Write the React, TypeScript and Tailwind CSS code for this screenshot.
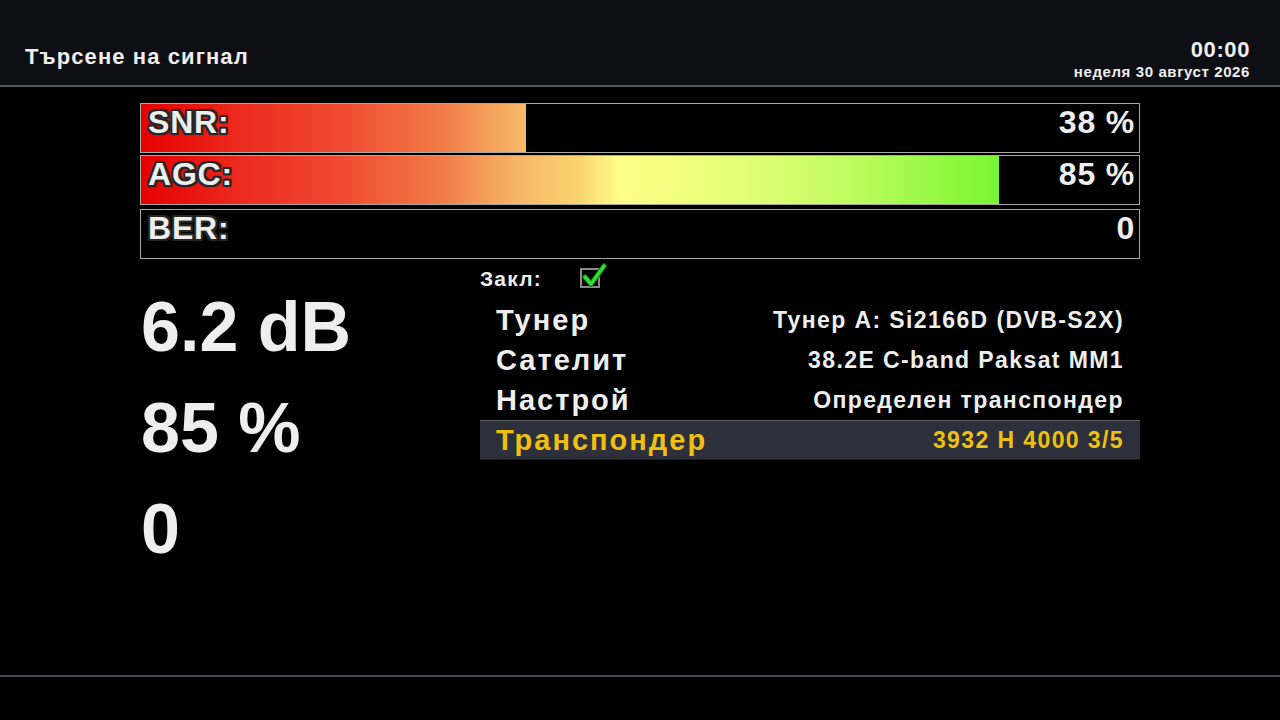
import React from "react";

const GRAD =
  "linear-gradient(to right, #e60000 0%, #ec2a1e 10%, #f04a30 20%, #f27a48 30%, #f6b868 38%, #fad470 44%, #ffff88 48%, #e4ff76 60%, #c4fc62 70%, #78f531 86%, #5af020 100%)";

function Bar({ label, value, pct, mt }: { label: string; value: string; pct: number; mt: string }) {
  return (
    <div className={`relative h-[50px] w-[1000px] border border-[#a8a8a8] bg-black ${mt}`}>
      <div className="absolute left-0 top-0 h-full overflow-hidden" style={{ width: `${pct}%` }}>
        <div className="h-full w-[998px]" style={{ backgroundImage: GRAD }} />
      </div>
      <div className="relative flex h-full items-start justify-between pl-[7px] pr-[4px] pt-[2px]">
        <span className="text-[32px] font-bold leading-[32px] tracking-[0.8px] text-[#eeeeee] [text-shadow:-2px_-2px_0_#262626,2px_-2px_0_#262626,-2px_2px_0_#262626,2px_2px_0_#262626,0_2px_0_#262626,0_-2px_0_#262626,2px_0_0_#262626,-2px_0_0_#262626,0_0_3px_#000]">
          {label}
        </span>
        <span className="text-[32px] font-bold leading-[32px] tracking-[0.8px] text-[#eeeeee]">{value}</span>
      </div>
    </div>
  );
}

function Row({ k, v, active }: { k: string; v: string; active?: boolean }) {
  return (
    <div
      className={`flex h-[40px] items-center justify-between px-[16px] ${
        active ? "border-t border-t-[#5a5c66] border-b border-b-[#1a1b22] bg-[#2d2f3b] text-[#f0c010]" : "text-[#eeeeee]"
      }`}
    >
      <span className="text-[29px] font-bold leading-[29px] tracking-[2px]">{k}</span>
      <span className="text-[23px] font-bold leading-[23px] tracking-[1.4px]">{v}</span>
    </div>
  );
}

export default function App() {
  return (
    <div className="flex h-[720px] w-[1280px] flex-col overflow-hidden bg-black font-['Liberation_Sans',Arial,sans-serif] text-[#eeeeee]">
      <header className="flex h-[85px] items-start justify-between bg-[#0e0f14] pl-[25px] pr-[30px]">
        <div className="mt-[46px] text-[22px] font-bold leading-[22px] tracking-[1.1px]">Търсене на сигнал</div>
        <div className="mt-[39px] flex flex-col items-end">
          <div className="text-[22px] font-bold leading-[22px] tracking-[0.6px]">00:00</div>
          <div className="mt-[3px] text-[15px] font-bold leading-[15px] tracking-[0.6px]">неделя 30 август 2026</div>
        </div>
      </header>
      <div className="h-[2px] bg-[#56575e]" />

      <div className="ml-[140px] flex w-[1000px] flex-col">
        <Bar label="SNR:" value="38 %" pct={38.6} mt="mt-[16px]" />
        <Bar label="AGC:" value="85 %" pct={86} mt="mt-[2px]" />
        <Bar label="BER:" value="0" pct={0} mt="mt-[4px]" />

        <div className="flex">
          <div className="mt-[18px] w-[340px] pl-[1px] text-[70px] font-bold leading-[101px] text-[#eeeeee]">
            <div>6.2 dB</div>
            <div>85 %</div>
            <div>0</div>
          </div>
          <div className="mt-[3px] flex w-[660px] flex-col">
            <div className="flex h-[38px] items-center pb-[6px]">
              <span className="w-[100px] text-[21px] font-bold leading-[21px] tracking-[1.2px]">Закл:</span>
              <div className="relative h-[20px] w-[20px] border-2 border-[#8a8a8a]">
                <svg className="absolute left-[0px] top-[-7px]" width="26" height="26" viewBox="0 0 26 26">
                  <path d="M3 14 L9 21 L22 3" fill="none" stroke="#176017" strokeWidth="5.5" strokeLinecap="round" strokeLinejoin="round" />
                  <path d="M3 14 L9 21 L22 3" fill="none" stroke="#2ee02e" strokeWidth="3.5" strokeLinecap="round" strokeLinejoin="round" />
                </svg>
              </div>
            </div>
            <Row k="Тунер" v="Тунер A: Si2166D (DVB-S2X)" />
            <Row k="Сателит" v="38.2E C-band Paksat MM1" />
            <Row k="Настрой" v="Определен транспондер" />
            <Row k="Транспондер" v="3932 H 4000 3/5" active />
          </div>
        </div>
      </div>

      <div className="mt-auto mb-[43px] h-[2px] bg-[#4a4b52]" />
    </div>
  );
}
